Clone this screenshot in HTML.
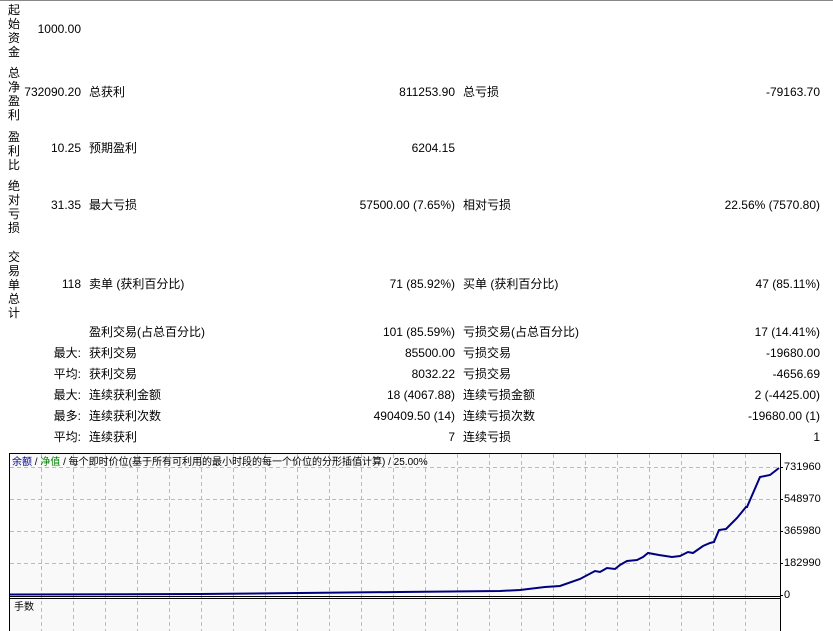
<!DOCTYPE html>
<html><head><meta charset="utf-8"><style>
body{margin:0;width:833px;height:631px;overflow:hidden;background:#fff;font-family:"Liberation Sans","Noto Sans CJK SC",sans-serif;font-size:12px;color:#000;position:relative}
.a{position:absolute;white-space:nowrap;line-height:14px}
.r{text-align:right}
.v{position:absolute;left:8px;width:12px;line-height:14px;font-size:12px}
</style></head><body>
<div style="position:absolute;left:0;top:0;width:833px;height:1px;background:#888"></div>

<div class="v" style="top:3px">起<br>始<br>资<br>金</div>
<div class="a r" style="right:752px;top:22px">1000.00</div>

<div class="v" style="top:66px">总<br>净<br>盈<br>利</div>
<div class="a r" style="right:752px;top:85px">732090.20</div>
<div class="a" style="left:89px;top:85px">总获利</div>
<div class="a r" style="right:378px;top:85px">811253.90</div>
<div class="a" style="left:463px;top:85px">总亏损</div>
<div class="a r" style="right:13px;top:85px">-79163.70</div>

<div class="v" style="top:130px">盈<br>利<br>比</div>
<div class="a r" style="right:752px;top:141px">10.25</div>
<div class="a" style="left:89px;top:141px">预期盈利</div>
<div class="a r" style="right:378px;top:141px">6204.15</div>

<div class="v" style="top:179px">绝<br>对<br>亏<br>损</div>
<div class="a r" style="right:752px;top:198px">31.35</div>
<div class="a" style="left:89px;top:198px">最大亏损</div>
<div class="a r" style="right:378px;top:198px">57500.00 (7.65%)</div>
<div class="a" style="left:463px;top:198px">相对亏损</div>
<div class="a r" style="right:13px;top:198px">22.56% (7570.80)</div>

<div class="v" style="top:250px">交<br>易<br>单<br>总<br>计</div>
<div class="a r" style="right:752px;top:277px">118</div>
<div class="a" style="left:89px;top:277px">卖单 (获利百分比)</div>
<div class="a r" style="right:378px;top:277px">71 (85.92%)</div>
<div class="a" style="left:463px;top:277px">买单 (获利百分比)</div>
<div class="a r" style="right:13px;top:277px">47 (85.11%)</div>

<div class="a" style="left:89px;top:325px">盈利交易(占总百分比)</div>
<div class="a r" style="right:378px;top:325px">101 (85.59%)</div>
<div class="a" style="left:463px;top:325px">亏损交易(占总百分比)</div>
<div class="a r" style="right:13px;top:325px">17 (14.41%)</div>

<div class="a r" style="right:752px;top:346px">最大:</div>
<div class="a" style="left:89px;top:346px">获利交易</div>
<div class="a r" style="right:378px;top:346px">85500.00</div>
<div class="a" style="left:463px;top:346px">亏损交易</div>
<div class="a r" style="right:13px;top:346px">-19680.00</div>

<div class="a r" style="right:752px;top:367px">平均:</div>
<div class="a" style="left:89px;top:367px">获利交易</div>
<div class="a r" style="right:378px;top:367px">8032.22</div>
<div class="a" style="left:463px;top:367px">亏损交易</div>
<div class="a r" style="right:13px;top:367px">-4656.69</div>

<div class="a r" style="right:752px;top:388px">最大:</div>
<div class="a" style="left:89px;top:388px">连续获利金额</div>
<div class="a r" style="right:378px;top:388px">18 (4067.88)</div>
<div class="a" style="left:463px;top:388px">连续亏损金额</div>
<div class="a r" style="right:13px;top:388px">2 (-4425.00)</div>

<div class="a r" style="right:752px;top:409px">最多:</div>
<div class="a" style="left:89px;top:409px">连续获利次数</div>
<div class="a r" style="right:378px;top:409px">490409.50 (14)</div>
<div class="a" style="left:463px;top:409px">连续亏损次数</div>
<div class="a r" style="right:13px;top:409px">-19680.00 (1)</div>

<div class="a r" style="right:752px;top:430px">平均:</div>
<div class="a" style="left:89px;top:430px">连续获利</div>
<div class="a r" style="right:378px;top:430px">7</div>
<div class="a" style="left:463px;top:430px">连续亏损</div>
<div class="a r" style="right:13px;top:430px">1</div>

<svg style="position:absolute;left:0;top:448px" width="833" height="183" viewBox="0 448 833 183">
<rect x="9.5" y="453.5" width="771" height="180" fill="#f9f9f9" stroke="#000"/>
<g stroke="#bbb" stroke-dasharray="4,3" stroke-width="1">
<path d="M41.5 454V631M73.5 454V631M105.5 454V631M137.5 454V631M169.5 454V631M201.5 454V631M233.5 454V631M265.5 454V631M297.5 454V631M329.5 454V631M361.5 454V631M393.5 454V631M425.5 454V631M457.5 454V631M489.5 454V631M521.5 454V631M553.5 454V631M585.5 454V631M617.5 454V631M649.5 454V631M681.5 454V631M713.5 454V631M745.5 454V631"/>
<path d="M10 467.5H780M10 499.5H780M10 531.5H780M10 563.5H780"/>
</g>
<path d="M10 596.5H781M10 598.5H781" stroke="#000"/>
<polyline fill="none" stroke="#000080" stroke-width="2" points="10,594.5 200,594 300,593 400,592 500,591 520,590 545,587 560,586 580,579 595,571 600,572 607,568 615,569 620,565 627,561 637,560 643,557 648,553 659,555 672,557 680,556 688,552 693,553 703,546 710,543 714,542 719,530 726,529 737,518 746,507 747,507 760,477 770,475 779,468"/>
<g font-size="11" font-family="Liberation Sans,sans-serif">
<text x="784" y="470">731960</text><text x="784" y="502">548970</text><text x="784" y="534">365980</text><text x="784" y="566">182990</text><text x="784" y="598">0</text>
</g>
<path d="M781 467.5h2M781 499.5h2M781 531.5h2M781 563.5h2M781 595.5h2" stroke="#000"/>
<text x="12" y="465" font-size="10" font-family="Liberation Sans,Noto Sans CJK SC,sans-serif"><tspan fill="#000080">余额</tspan> / <tspan fill="#008000">净值</tspan> / 每个即时价位(基于所有可利用的最小时段的每一个价位的分形插值计算) / 25.00%</text>
<text x="14" y="610" font-size="10" font-family="Noto Sans CJK SC,sans-serif">手数</text>
</svg>
</body></html>
